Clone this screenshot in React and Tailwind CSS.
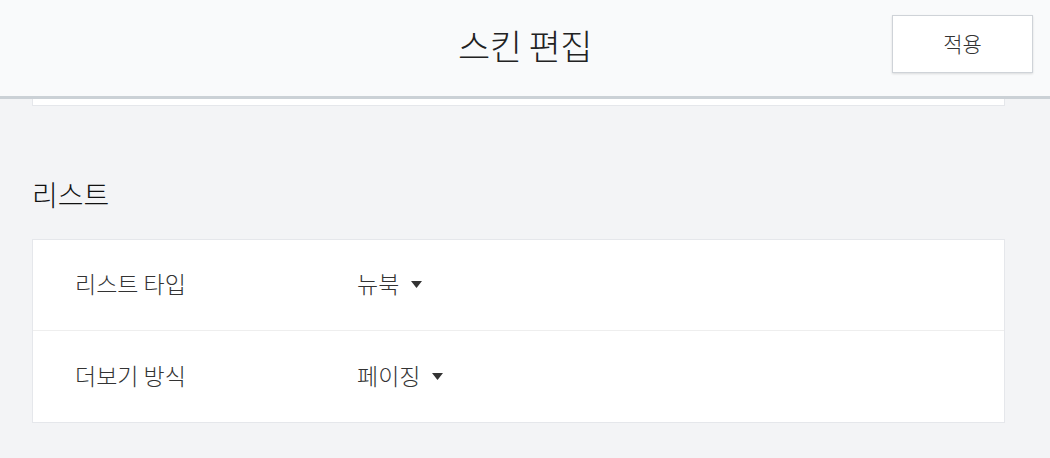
import { useState } from 'react'

const font = { fontFamily: '"Noto Sans CJK KR", "Noto Sans", sans-serif' }

function Caret() {
  return (
    <svg width="11" height="7" viewBox="0 0 11 7" className="ml-3 mt-0.5">
      <path d="M0 0 H11 L5.5 7 Z" fill="#333" />
    </svg>
  )
}

function Row({ label, value, last }) {
  return (
    <div className={`flex h-[91px] items-center px-[42px] pb-[3px] ${last ? '' : 'border-b border-[#eeeeee]'}`}>
      <div className="w-[282px] text-[23px] font-light text-[#333]">{label}</div>
      <button type="button" className="flex items-center text-[23px] font-light text-[#333]">
        {value}
        <Caret />
      </button>
    </div>
  )
}

export default function App() {
  const [listType] = useState('뉴북')
  const [moreType] = useState('페이징')

  return (
    <div className="min-h-[458px] bg-[#f3f4f6]" style={font}>
      <header className="relative flex h-[99px] items-center justify-center border-b-[3px] border-[#cbd1d6] bg-[#f9fafb] pb-[6px]">
        <h1 className="text-[35px] font-light tracking-[-0.5px] text-[#222]">스킨 편집</h1>
        <button
          type="button"
          className="absolute right-[17px] top-[15px] h-[58px] w-[141px] border border-[#cfd3d8] bg-white text-[21px] font-light text-[#333] shadow-[0_1px_2px_rgba(0,0,0,0.12)]"
        >
          적용
        </button>
      </header>

      <div className="mx-[32px] w-[973px]">
        <div className="h-[7px] border-x border-b border-[#e5e7eb] bg-white" />

        <h2 className="mt-[70px] text-[28px] font-light leading-[36px] text-[#111]">리스트</h2>

        <div className="mt-[27px] border border-[#e5e7eb] bg-white">
          <Row label="리스트 타입" value={listType} />
          <Row label="더보기 방식" value={moreType} last />
        </div>
      </div>
    </div>
  )
}
